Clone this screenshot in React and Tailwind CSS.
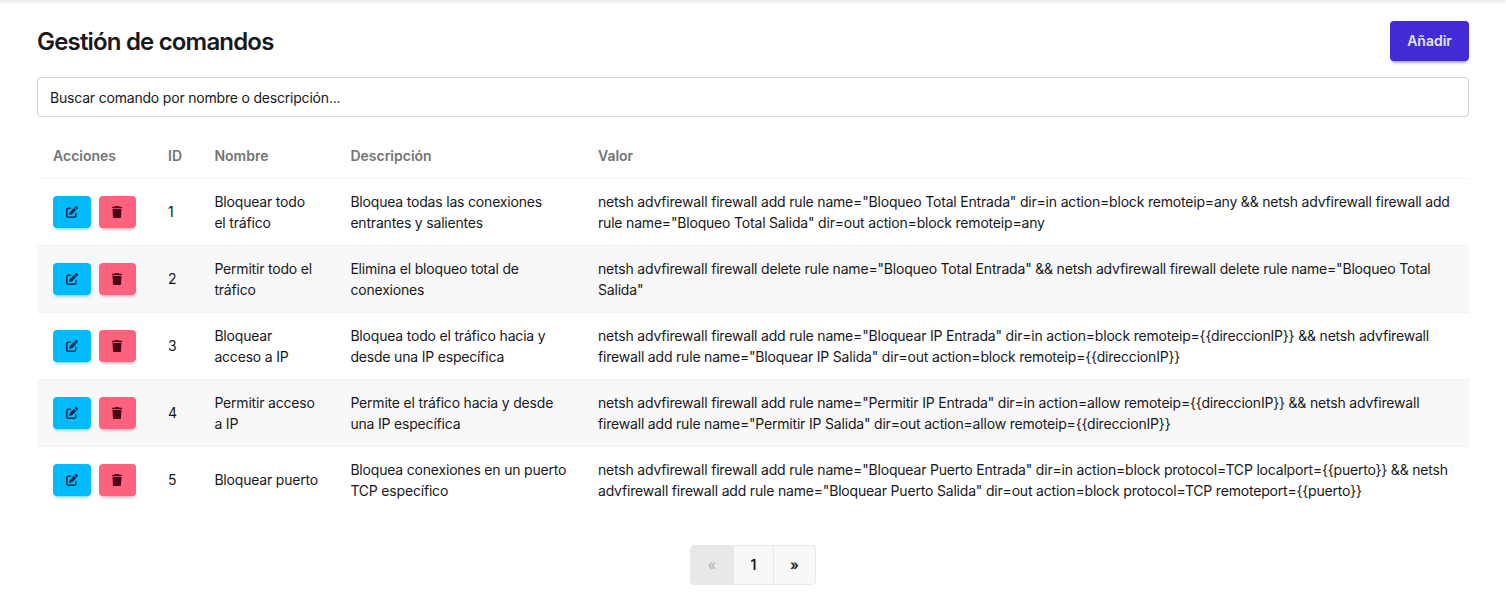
import { FaPenToSquare, FaTrash } from "react-icons/fa6";

const rows = [
  { id: 1, name: ["Bloquear todo", "el tráfico"], desc: ["Bloquea todas las conexiones", "entrantes y salientes"], value: ['netsh advfirewall firewall add rule name="Bloqueo Total Entrada" dir=in action=block remoteip=any && netsh advfirewall firewall add', 'rule name="Bloqueo Total Salida" dir=out action=block remoteip=any'] },
  { id: 2, name: ["Permitir todo el", "tráfico"], desc: ["Elimina el bloqueo total de", "conexiones"], value: ['netsh advfirewall firewall delete rule name="Bloqueo Total Entrada" && netsh advfirewall firewall delete rule name="Bloqueo Total', 'Salida"'] },
  { id: 3, name: ["Bloquear", "acceso a IP"], desc: ["Bloquea todo el tráfico hacia y", "desde una IP específica"], value: ['netsh advfirewall firewall add rule name="Bloquear IP Entrada" dir=in action=block remoteip={{direccionIP}} && netsh advfirewall', 'firewall add rule name="Bloquear IP Salida" dir=out action=block remoteip={{direccionIP}}'] },
  { id: 4, name: ["Permitir acceso", "a IP"], desc: ["Permite el tráfico hacia y desde", "una IP específica"], value: ['netsh advfirewall firewall add rule name="Permitir IP Entrada" dir=in action=allow remoteip={{direccionIP}} && netsh advfirewall', 'firewall add rule name="Permitir IP Salida" dir=out action=allow remoteip={{direccionIP}}'] },
  { id: 5, name: ["Bloquear puerto"], desc: ["Bloquea conexiones en un puerto", "TCP específico"], value: ['netsh advfirewall firewall add rule name="Bloquear Puerto Entrada" dir=in action=block protocol=TCP localport={{puerto}} && netsh', 'advfirewall firewall add rule name="Bloquear Puerto Salida" dir=out action=block protocol=TCP remoteport={{puerto}}'] },
];

const cols = "grid grid-cols-[115px_46.4px_136px_247.6px_1fr] items-center pl-4";

function Lines({ lines }) {
  return (
    <div className={lines.length === 1 ? "pb-px" : ""}>
      {lines.map((line) => (
        <div key={line} className="w-max whitespace-nowrap">{line}</div>
      ))}
    </div>
  );
}

export default function App() {
  return (
    <div className="h-[597px] overflow-hidden bg-white font-['Inter',sans-serif] text-[14px] text-[#18181b]">
      <div className="h-0 shadow-[0_0_4px_1px_rgba(0,0,0,0.2)]" />
      <main className="px-[37px] pt-[21px]">
        <header className="flex h-[41px] items-start justify-between">
          <h1 className="pt-[3px] text-[24px] leading-9 font-semibold tracking-[-0.82px]">Gestión de comandos</h1>
          <button className="h-10 w-[79px] rounded bg-[#422ad5] pb-0.5 text-[14px] font-semibold text-[#e0e7ff] shadow-[0_3px_2px_-2px_rgba(66,42,213,0.3),0_4px_3px_-2px_rgba(66,42,213,0.3)]">Añadir</button>
        </header>
        <div className="mt-[15px] flex h-10 items-center rounded border border-[#d1d1d1] px-3 tracking-[-0.195px]">Buscar comando por nombre o descripción...</div>
        <div className="mt-4">
          <div className={`${cols} h-[46px] border-b border-[#f3f3f3] font-semibold text-[#747476]`}>
            <div>Acciones</div><div>ID</div><div>Nombre</div><div>Descripción</div><div>Valor</div>
          </div>
          {rows.map((row) => (
            <div key={row.id} className={`${cols} h-[67px] border-b border-[#f3f3f3] leading-[21px] tracking-[-0.19px] last:border-b-transparent even:bg-white odd:bg-[#f8f8f8]`}>
              <div className="flex gap-2">
                <button className="flex h-8 w-[38px] items-center justify-center rounded bg-[#00bafe] text-[#042e49] shadow-[0_3px_2px_-2px_rgba(0,186,254,0.3),0_4px_3px_-2px_rgba(0,186,254,0.3)]"><FaPenToSquare size={12} /></button>
                <button className="flex h-8 w-[37px] items-center justify-center rounded bg-[#ff627d] pr-px text-[#4d0218] shadow-[0_3px_2px_-2px_rgba(255,98,125,0.3),0_4px_3px_-2px_rgba(255,98,125,0.3)]"><FaTrash size={12} /></button>
              </div>
              <div className="pb-px">{row.id}</div>
              <Lines lines={row.name} />
              <Lines lines={row.desc} />
              <Lines lines={row.value} />
            </div>
          ))}
        </div>
        <nav className="mx-auto mt-[31px] flex h-10 w-[126px] overflow-hidden rounded border border-[#e8e8e8] bg-[#f8f8f8] font-semibold">
          <button className="w-[43px] bg-[#e8e8e8] pr-px pb-0.5 text-[#bababb]">«</button>
          <button className="w-[39px] pb-0.5">1</button>
          <button className="flex-1 border-l border-[#e8e8e8] pb-0.5">»</button>
        </nav>
      </main>
    </div>
  );
}
